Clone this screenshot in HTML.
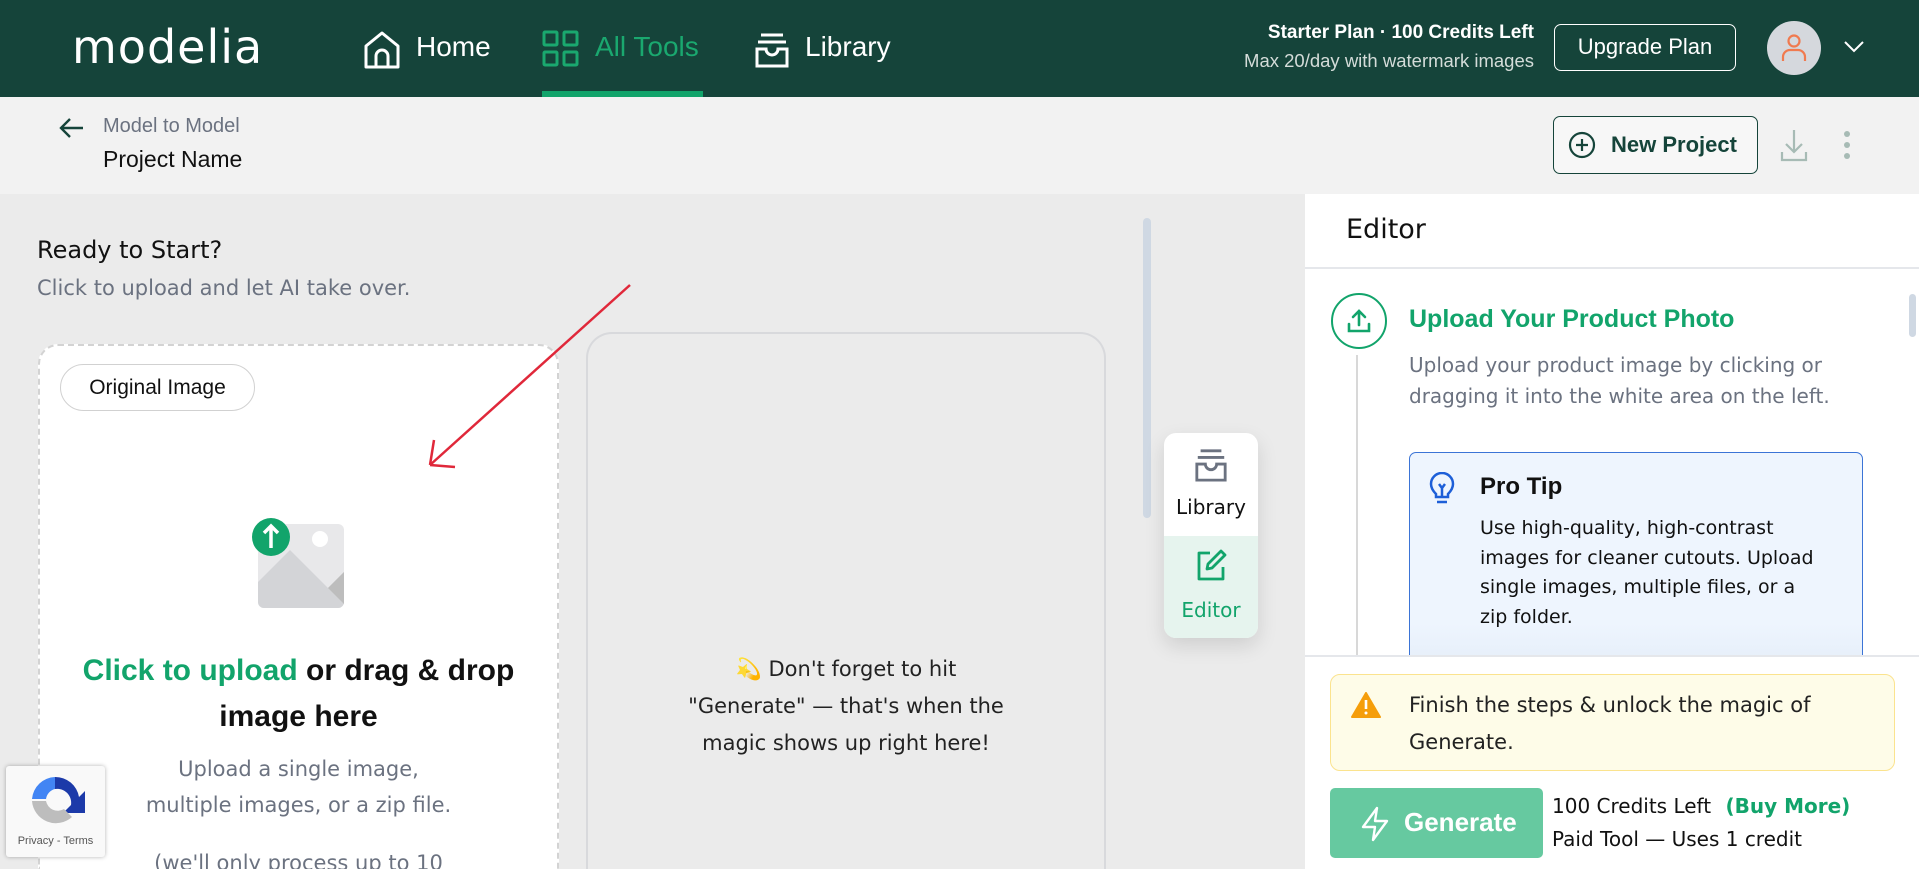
<!DOCTYPE html>
<html><head><meta charset="utf-8"><style>
*{box-sizing:border-box;margin:0;padding:0}
html,body{width:1919px;height:869px;overflow:hidden}
body{position:relative;font-family:"DejaVu Sans","Liberation Sans",sans-serif;background:#ebebeb;color:#111}
#w{position:absolute;left:0;top:0;width:1919px;height:869px;overflow:hidden}
.a{position:absolute;white-space:nowrap}
.l{font-family:"Liberation Sans",sans-serif}
</style></head><body><div id="w">
<div class="a" style="left:0;top:0;width:1919px;height:97px;background:#15443a"></div>
<div class="a" style="left:72px;top:20px;font-size:46px;color:#fff;letter-spacing:1px;font-family:'DejaVu Sans',sans-serif">modelia</div>
<svg class="a" style="left:363px;top:30px" width="38" height="40" viewBox="0 0 38 40" fill="none" stroke="#fff" stroke-width="3" stroke-linejoin="round"><path d="M3 16 L19 3 L35 16 V37 H3 Z"/><path d="M13 37 V26 a6 6 0 0 1 12 0 V37"/></svg>
<div class="a l" style="left:416px;top:31px;font-size:28px;color:#fff">Home</div>
<svg class="a" style="left:542px;top:30px" width="37" height="37" viewBox="0 0 37 37" fill="none" stroke="#1aa86f" stroke-width="3"><rect x="2" y="2" width="13" height="13" rx="1"/><rect x="22" y="2" width="13" height="13" rx="1"/><rect x="2" y="22" width="13" height="13" rx="1"/><rect x="22" y="22" width="13" height="13" rx="1"/></svg>
<div class="a l" style="left:595px;top:31px;font-size:28px;color:#1aa86f">All Tools</div>
<div class="a" style="left:542px;top:91px;width:161px;height:6px;background:#12a46b"></div>
<svg class="a" style="left:754px;top:32px" width="36" height="36" viewBox="0 0 36 36" fill="none" stroke="#fff" stroke-width="3"><path d="M7 3H29M4 10H32"/><path d="M3 17H12a6 6 0 0 0 12 0H33V34H3Z"/></svg>
<div class="a l" style="left:805px;top:31px;font-size:28px;color:#fff">Library</div>
<div class="a l" style="right:385px;top:22px;font-size:19px;color:#fff;font-weight:bold;text-align:right">Starter Plan · 100 Credits Left</div>
<div class="a l" style="right:385px;top:50px;font-size:18.5px;color:#d4dcd9;text-align:right">Max 20/day with watermark images</div>
<div class="a l" style="left:1554px;top:24px;width:182px;height:47px;border:1.5px solid #fff;border-radius:7px;color:#fff;font-size:22px;text-align:center;line-height:44px">Upgrade Plan</div>
<div class="a" style="left:1767px;top:21px;width:54px;height:54px;border-radius:50%;background:#d5d8dd"></div>
<svg class="a" style="left:1780px;top:33px" width="28" height="30" viewBox="0 0 28 30" fill="none" stroke="#f07a4f" stroke-width="2.2"><circle cx="14" cy="8" r="5.5"/><path d="M3 28v-4a7 7 0 0 1 7-7h8a7 7 0 0 1 7 7v4"/></svg>
<svg class="a" style="left:1843px;top:40px" width="22" height="14" viewBox="0 0 22 14" fill="none" stroke="#fff" stroke-width="2"><path d="M2 2l9 9 9-9"/></svg>
<div class="a" style="left:0;top:97px;width:1919px;height:97px;background:#f2f2f2"></div>
<svg class="a" style="left:59px;top:117px" width="26" height="22" viewBox="0 0 26 22" fill="none" stroke="#15443a" stroke-width="2.4"><path d="M24 11H3M11 2L2 11l9 9"/></svg>
<div class="a l" style="left:103px;top:115px;font-size:20px;color:#6b7280">Model to Model</div>
<div class="a l" style="left:103px;top:146px;font-size:23px;color:#111">Project Name</div>
<div class="a" style="left:1553px;top:116px;width:205px;height:58px;border:1.5px solid #15443a;border-radius:7px;background:#f7f7f7"></div>
<svg class="a" style="left:1568px;top:131px" width="28" height="28" viewBox="0 0 28 28" fill="none" stroke="#15443a" stroke-width="2.2"><circle cx="14" cy="14" r="12"/><path d="M14 8v12M8 14h12"/></svg>
<div class="a l" style="left:1611px;top:132px;font-size:22px;color:#15443a;font-weight:bold">New Project</div>
<svg class="a" style="left:1780px;top:128px" width="28" height="34" viewBox="0 0 28 34" fill="none" stroke="#a7bbb5" stroke-width="2.2"><path d="M14 2v22M6 16l8 8 8-8M2 24v8h24v-8"/></svg>
<div class="a" style="left:1844px;top:131px;width:6px;height:6px;border-radius:50%;background:#a7bbb5;box-shadow:0 11px 0 #a7bbb5,0 22px 0 #a7bbb5"></div>
<div class="a" style="left:37px;top:236px;font-size:24px;color:#111">Ready to Start?</div>
<div class="a" style="left:37px;top:276px;font-size:21px;color:#6b7280">Click to upload and let AI take over.</div>
<div class="a" style="left:38px;top:344px;width:521px;height:525px;background:#fff;border:2px dashed #d3d3d3;border-bottom:none;border-radius:20px 20px 0 0"></div>
<div class="a l" style="left:60px;top:364px;width:195px;height:47px;border:1px solid #d1d1d1;border-radius:24px;font-size:21px;text-align:center;line-height:45px;color:#111">Original Image</div>
<svg class="a" style="left:250px;top:500px" width="100" height="110" viewBox="0 0 100 110" ><rect x="8" y="24" width="86" height="84" rx="6" fill="#e8e8ea"/><circle cx="70" cy="39" r="8" fill="#fff"/><path d="M8 82 L40 50 L78 88 L94 72 V102 a6 6 0 0 1-6 6 H14 a6 6 0 0 1-6-6Z" fill="#d3d4d7"/><path d="M78 88 L94 72 V104 Z" fill="#bdbdbd"/><circle cx="21" cy="37" r="19" fill="#12a46b"/><path d="M21 48V27M14 33l7-7 7 7" stroke="#fff" stroke-width="3.5" fill="none"/></svg>
<div class="a l" style="left:38px;top:648px;width:521px;text-align:center;font-size:30px;font-weight:bold;line-height:46px;white-space:normal;color:#111"><span style="color:#12a46b">Click to upload</span> or drag &amp; drop<br>image here</div>
<div class="a" style="left:38px;top:751px;width:521px;height:118px;overflow:hidden;text-align:center;font-size:21px;line-height:36px;white-space:normal;color:#6b7280">Upload a single image,<br>multiple images, or a zip file.<div style="margin-top:22px">(we'll only process up to 10</div></div>
<div class="a" style="left:586px;top:332px;width:520px;height:537px;border:2.5px solid #d8d9dc;border-bottom:none;border-radius:26px 26px 0 0"></div>
<div class="a" style="left:586px;top:651px;width:520px;text-align:center;font-size:21px;line-height:37px;color:#222">💫 Don't forget to hit<br>"Generate" — that's when the<br>magic shows up right here!</div>
<svg class="a" style="left:420px;top:280px" width="215" height="195"><path d="M210 5 L10 185" stroke="#e0283a" stroke-width="2.5"/><path d="M10 185 L14 160 M10 185 L35 187" stroke="#e0283a" stroke-width="2.5" fill="none"/></svg>
<div class="a" style="left:1143px;top:218px;width:8px;height:300px;border-radius:4px;background:#cfd8e3"></div>
<div class="a" style="left:1164px;top:433px;width:94px;height:205px;background:#fff;border-radius:12px;box-shadow:0 8px 20px rgba(0,0,0,.12);overflow:hidden">
<div style="position:absolute;left:0;top:103px;width:94px;height:102px;background:#e6f4ee"></div></div>
<svg class="a" style="left:1194px;top:448px" width="34" height="34" viewBox="0 0 36 36" fill="none" stroke="#6b7280" stroke-width="3"><path d="M7 3H29M4 10H32"/><path d="M3 17H12a6 6 0 0 0 12 0H33V34H3Z"/></svg>
<div class="a" style="left:1164px;top:495px;width:94px;text-align:center;font-size:20px;color:#111">Library</div>
<svg class="a" style="left:1194px;top:548px" width="34" height="34" viewBox="0 0 34 34" fill="none" stroke="#12a46b" stroke-width="2.8" stroke-linejoin="round"><path d="M16 5H5v26h24V19"/><path d="M27 3l4 4-13 13-5 1 1-5Z"/></svg>
<div class="a" style="left:1164px;top:598px;width:94px;text-align:center;font-size:20px;color:#12a46b">Editor</div>
<div class="a" style="left:6px;top:766px;width:99px;height:91px;background:#f9f9f9;border-radius:3px;box-shadow:0 0 4px rgba(0,0,0,.3)"></div>
<svg class="a" style="left:30px;top:773px" width="55" height="55" viewBox="0 0 55 55"><path d="M25 4a24 24 0 0 1 24 20l6-6v22H33l8-8A14 14 0 0 0 25 16Z" fill="#1c3aa9"/><path d="M25 4A24 24 0 0 0 2 26h14A12 12 0 0 1 25 16Z" fill="#4285f4"/><path d="M2 28a24 24 0 0 0 40 16l-8-8a12 12 0 0 1-18-8Z" fill="#bdbdbd"/></svg>
<div class="a l" style="left:6px;top:835px;width:99px;text-align:center;font-size:11px;color:#555">Privacy - Terms</div>
<div class="a" style="left:1305px;top:194px;width:614px;height:675px;background:#fff"></div>
<div class="a" style="left:1346px;top:214px;font-size:27px;color:#111">Editor</div>
<div class="a" style="left:1305px;top:267px;width:614px;height:2px;background:#e5e7eb"></div>
<div class="a" style="left:1331px;top:293px;width:56px;height:56px;border:2.5px solid #12a46b;border-radius:50%"></div>
<svg class="a" style="left:1345px;top:307px" width="28" height="28" viewBox="0 0 28 28" fill="none" stroke="#12a46b" stroke-width="2.6" stroke-linecap="round"><path d="M14 18V4M8 10l6-6 6 6M4 17v7h20v-7"/></svg>
<div class="a" style="left:1356px;top:355px;width:2px;height:300px;background:#d8d8d8"></div>
<div class="a l" style="left:1409px;top:305px;font-size:25px;font-weight:bold;color:#12a46b">Upload Your Product Photo</div>
<div class="a" style="left:1409px;top:350px;font-size:20px;line-height:31px;color:#6b7280">Upload your product image by clicking or<br>dragging it into the white area on the left.</div>
<div class="a" style="left:1409px;top:452px;width:454px;height:215px;border:1.5px solid #3b74d6;border-radius:7px;background:linear-gradient(#eef5fe 80%,#e5eef9)"></div>
<svg class="a" style="left:1429px;top:472px" width="26" height="34" viewBox="0 0 26 34" fill="none" stroke="#1d5fd8" stroke-width="2.5"><path d="M7 22c-3-3-5-6-5-10a11 11 0 0 1 22 0c0 4-2 7-5 10v3H7Z"/><path d="M10 12l3 4 3-4M13 16v8M8 30h10"/></svg>
<div class="a l" style="left:1480px;top:473px;font-size:24px;font-weight:bold;color:#111">Pro Tip</div>
<div class="a" style="left:1480px;top:514px;font-size:19px;line-height:29.5px;color:#111">Use high-quality, high-contrast<br>images for cleaner cutouts. Upload<br>single images, multiple files, or a<br>zip folder.</div>
<div class="a" style="left:1909px;top:294px;width:7px;height:43px;border-radius:4px;background:#cfd8e3"></div>
<div class="a" style="left:1305px;top:655px;width:614px;height:214px;background:#fff;border-top:2px solid #e5e7eb"></div>
<div class="a" style="left:1330px;top:674px;width:565px;height:97px;background:#fefce8;border:1.5px solid #fbe38e;border-radius:10px"></div>
<svg class="a" style="left:1351px;top:692px" width="30" height="26" viewBox="0 0 30 26"><path d="M15 1 L29 25 H1 Z" fill="#f59e0b" stroke="#f59e0b" stroke-width="2" stroke-linejoin="round"/><path d="M15 8v9" stroke="#fff" stroke-width="2.6"/><circle cx="15" cy="21" r="1.5" fill="#fff"/></svg>
<div class="a" style="left:1409px;top:687px;font-size:21px;line-height:37px;color:#222">Finish the steps &amp; unlock the magic of<br>Generate.</div>
<div class="a" style="left:1330px;top:788px;width:213px;height:70px;background:#66c9a0;border-radius:5px"></div>
<svg class="a" style="left:1359px;top:806px" width="32" height="36" viewBox="0 0 32 36" fill="none" stroke="#fff" stroke-width="2.4" stroke-linejoin="round"><path d="M18 2L4 21h12l-2 13 14-19H16Z"/></svg>
<div class="a l" style="left:1404px;top:807px;font-size:26px;font-weight:bold;color:#fff">Generate</div>
<div class="a" style="left:1552px;top:794px;font-size:20px;color:#111">100 Credits Left <span style="color:#12a46b;font-weight:bold;margin-left:8px">(Buy More)</span></div>
<div class="a" style="left:1552px;top:827px;font-size:20px;color:#111">Paid Tool — Uses 1 credit</div>
</div></body></html>
